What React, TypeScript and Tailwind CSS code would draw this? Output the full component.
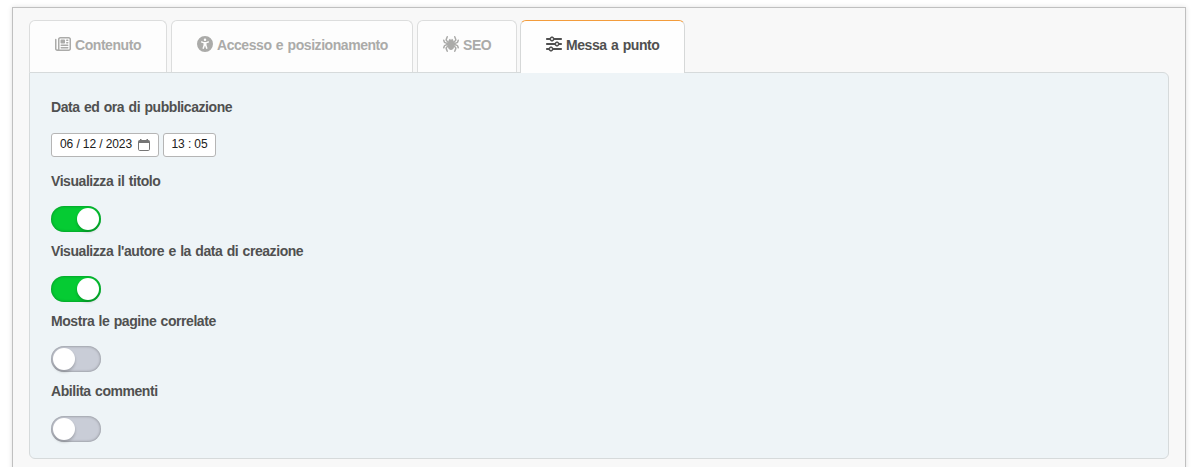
import type { ReactNode } from "react";
import { FaRegNewspaper, FaUniversalAccess, FaSpider, FaSliders } from "react-icons/fa6";

type TabProps = { icon: ReactNode; label: string; size: string; active?: boolean };

function Tab({ icon, label, size, active }: TabProps) {
  return (
    <div
      className={`flex shrink-0 items-start rounded-t-md border border-b-0 pt-[15px] pl-[25px] ${size} ${
        active
          ? "h-[53px] border-[#d6d8d8] border-t-[#f39c3c] bg-[#fefefe] text-[#505050]"
          : "h-[52px] border-[#dcdddd] bg-[#fdfdfd] text-[#ababa9]"
      }`}
    >
      <span className="flex h-4 w-4 shrink-0 items-center">{icon}</span>
      <span className="ml-1 whitespace-nowrap pt-px leading-4">{label}</span>
    </div>
  );
}

function Toggle({ label, on }: { label: string; on: boolean }) {
  return (
    <div className="h-[70px]">
      <div className="h-[33px] leading-4">{label}</div>
      <div
        role="switch"
        aria-checked={on}
        aria-label={label}
        className={`flex h-[26px] w-[50px] items-center rounded-full px-[2px] ${
          on
            ? "justify-end bg-[#05cb33] shadow-[inset_0_0_3px_rgba(0,70,20,0.55)]"
            : "justify-start bg-[#c9cdd7] shadow-[inset_0_0_3px_rgba(0,0,0,0.4)]"
        }`}
      >
        <div className="size-[22px] rounded-full bg-white shadow-[0_2px_3px_rgba(0,0,0,0.22)]" />
      </div>
    </div>
  );
}

function CalendarIcon() {
  return (
    <svg className="ml-[6px] h-3 w-3" viewBox="0 0 12 12" fill="none">
      <rect x="0.5" y="1.5" width="11" height="10" rx="1.2" stroke="#757575" strokeWidth="1" />
      <path d="M0.6 1.5h10.8v2.5H0.6zM2 0h1.5v2H2zM8.5 0H10v2H8.5z" fill="#757575" />
    </svg>
  );
}

export default function App() {
  return (
    <div className="h-[467px] w-[1198px] overflow-hidden bg-white pt-[7px] pl-3 font-['Liberation_Sans',Arial,sans-serif] text-sm font-bold tracking-[-0.44px] [word-spacing:0.9px] text-[#505050]">
      <div className="h-[470px] w-[1174px] border border-[#c0c0c0] bg-[#f8f8f8] px-4 pt-3 shadow-[0_0_5px_rgba(0,0,0,0.12)]">
        <div className="relative z-10 -mb-px flex h-[53px] items-start gap-1">
          <Tab size="w-[138px]" icon={<FaRegNewspaper className="size-4" />} label="Contenuto" />
          <Tab size="w-[242px]" icon={<FaUniversalAccess className="size-4" />} label="Accesso e posizionamento" />
          <Tab size="w-[100px]" icon={<FaSpider className="size-4" />} label="SEO" />
          <Tab size="-ml-px w-[165px]" icon={<FaSliders className="size-4" />} label="Messa a punto" active />
        </div>
        <div className="h-[387px] w-[1140px] rounded-md rounded-tl-none border border-[#d6dadb] bg-[#eef4f7] px-[21px] pt-[26px]">
          <div className="h-[34px] leading-4">Data ed ora di pubblicazione</div>
          <div className="flex h-10 gap-1 text-xs font-normal tracking-[-0.1px] text-[#202020] [word-spacing:0px]">
            <div className="flex h-6 w-[108px] items-center rounded-[3px] border border-[#b5b5b5] bg-white pl-2 whitespace-nowrap">
              <span className="-mt-0.5">06 / 12 / 2023</span>
              <CalendarIcon />
            </div>
            <div className="flex h-6 w-[53px] items-center rounded-[3px] border border-[#b5b5b5] bg-white pl-[7.5px] whitespace-nowrap">
              <span className="-mt-0.5">13 : 05</span>
            </div>
          </div>
          <Toggle label="Visualizza il titolo" on />
          <Toggle label="Visualizza l'autore e la data di creazione" on />
          <Toggle label="Mostra le pagine correlate" on={false} />
          <Toggle label="Abilita commenti" on={false} />
        </div>
      </div>
    </div>
  );
}
